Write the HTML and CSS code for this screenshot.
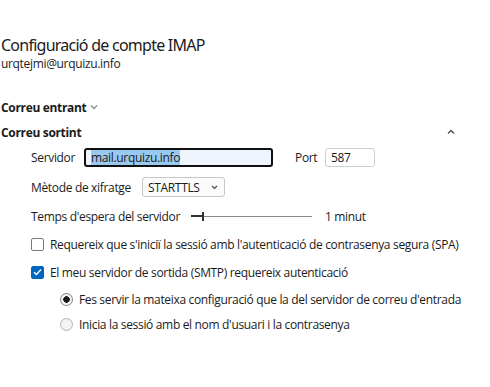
FILE: index.html
```html
<html lang="ca">

<head>
    <meta charset="UTF-8">
    <meta name="viewport" content="width=device-width, initial-scale=1.0">
    <title>Configuració de compte IMAP</title>
    <link rel="stylesheet" href="styles.css">
</head>

<body>
    <div class="page">
        <h1 class="title">Configuració de compte IMAP</h1>
        <div class="email">urqtejmi@urquizu.info</div>

        <div class="section section-in">
            <span>Correu entrant</span>
            <svg class="chev-down" width="8" height="6" viewBox="0 0 8 6">
                <path d="M1 1.5 L4 4.5 L7 1.5" fill="none" stroke="#8a8a8a" stroke-width="1.3"/>
            </svg>
        </div>

        <div class="section section-out">
            <span>Correu sortint</span>
            <svg class="chev-up" width="8" height="6" viewBox="0 0 8 6">
                <path d="M1 4.5 L4 1.5 L7 4.5" fill="none" stroke="#555" stroke-width="1.5"/>
            </svg>
        </div>

        <div class="form">
            <div class="row row-server">
                <label class="lbl lbl-server">Servidor</label>
                <div class="input server"><span class="sel-text">mail.urquizu.info</span></div>
                <label class="lbl port-lbl">Port</label>
                <div class="input port">587</div>
            </div>

            <div class="row row-method">
                <label class="lbl lbl-method">Mètode de xifratge</label>
                <div class="select">
                    <span>STARTTLS</span>
                    <svg width="7" height="5" viewBox="0 0 7 5">
                        <path d="M1 1 L3.5 3.5 L6 1" fill="none" stroke="#444" stroke-width="1.1"/>
                    </svg>
                </div>
            </div>

            <div class="row row-timeout">
                <label class="lbl lbl-timeout">Temps d'espera del servidor</label>
                <div class="slider">
                    <div class="track-fill"></div>
                    <div class="thumb"></div>
                    <div class="track"></div>
                </div>
                <span class="slider-val">1 minut</span>
            </div>

            <div class="row row-check">
                <span class="checkbox"></span>
                <span>Requereix que s'iniciï la sessió amb l'autenticació de contrasenya segura (SPA)</span>
            </div>

            <div class="row row-check row-check2">
                <span class="checkbox checked">
                    <svg width="9" height="8" viewBox="0 0 9 8">
                        <path d="M1 4.2 L3.4 6.4 L8 1.6" fill="none" stroke="#fff" stroke-width="1.4"/>
                    </svg>
                </span>
                <span>El meu servidor de sortida (SMTP) requereix autenticació</span>
            </div>

            <div class="row row-radio">
                <span class="radio on"></span>
                <span>Fes servir la mateixa configuració que la del servidor de correu d'entrada</span>
            </div>

            <div class="row row-radio row-radio2">
                <span class="radio"></span>
                <span>Inicia la sessió amb el nom d'usuari i la contrasenya</span>
            </div>
        </div>
    </div>
</body>

</html>
```

FILE: styles.css
```css
body {
    margin: 0;
    background: #ffffff;
    font-family: "Segoe UI", "Open Sans", sans-serif;
    color: #1b1b1b;
    font-size: 12px;
    letter-spacing: -0.33px;
    white-space: nowrap;
}

.page {
    width: 460px;
    padding: 34px 0 0 1px;
}

.title {
    margin: 0;
    font-family: "Segoe UI", "Noto Sans", sans-serif;
    font-size: 16px;
    font-weight: 400;
    line-height: 22px;
    letter-spacing: -0.75px;
}

.email {
    line-height: 16px;
}

.section {
    display: flex;
    align-items: center;
    height: 20px;
    font-weight: 700;
}

.section-in {
    margin-top: 25px;
    gap: 4px;
}

.section-out {
    margin-top: 5px;
    justify-content: space-between;
}

.chev-up {
    margin-right: 6px;
}

.form {
    padding-left: 30px;
}

.row {
    display: flex;
    align-items: center;
    height: 20px;
}

.row-server {
    margin-top: 5px;
}

.lbl {
    display: block;
}

.lbl-server {
    width: 53px;
}

.lbl-method {
    width: 102px;
}

.lbl-timeout {
    width: 160px;
}

.input {
    box-sizing: border-box;
    height: 19px;
    border-radius: 3px;
    display: flex;
    align-items: center;
}

.server {
    width: 189px;
    border: 2px solid #111;
    background: #eef5fd;
    padding-left: 5px;
}

.sel-text {
    background: #99c9ef;
    line-height: 15px;
}

.port-lbl {
    margin-left: 22px;
    width: 30px;
}

.port {
    width: 50px;
    border: 1px solid #cfcfcf;
    padding-left: 5px;
}

.row-method {
    margin-top: 10px;
}

.select {
    box-sizing: border-box;
    width: 83px;
    height: 20px;
    margin-left: 9px;
    border: 1px solid #c8c8c8;
    border-radius: 3px;
    background: #fbfbfb;
    display: flex;
    align-items: center;
    justify-content: space-between;
    padding: 0 6px 0 5px;
}

.row-timeout {
    margin-top: 9px;
}

.slider {
    width: 121px;
    height: 10px;
    display: flex;
    align-items: center;
}

.track-fill {
    width: 11px;
    height: 2px;
    background: #333;
}

.thumb {
    width: 2px;
    height: 9px;
    background: #333;
}

.track {
    flex: 1;
    height: 1px;
    background: #8a8a8a;
}

.slider-val {
    margin-left: 13px;
}

.row-check {
    margin-top: 8px;
    gap: 6px;
}

.checkbox {
    box-sizing: border-box;
    width: 13px;
    height: 13px;
    border: 1px solid #7a7a7a;
    border-radius: 2px;
    display: flex;
    align-items: center;
    justify-content: center;
}

.checkbox.checked {
    background: #0067c0;
    border-color: #0067c0;
}

.row-radio {
    margin-top: 7px;
    padding-left: 29px;
    gap: 6px;
}

.row-radio2 {
    margin-top: 5px;
}

.radio {
    box-sizing: border-box;
    width: 13px;
    height: 13px;
    border: 1px solid #b5b5b5;
    border-radius: 50%;
    background: #f3f3f3;
}

.radio.on {
    border-color: #8a8a8a;
    background: radial-gradient(circle, #1b1b1b 0 3px, #f3f3f3 3.5px);
}
```
